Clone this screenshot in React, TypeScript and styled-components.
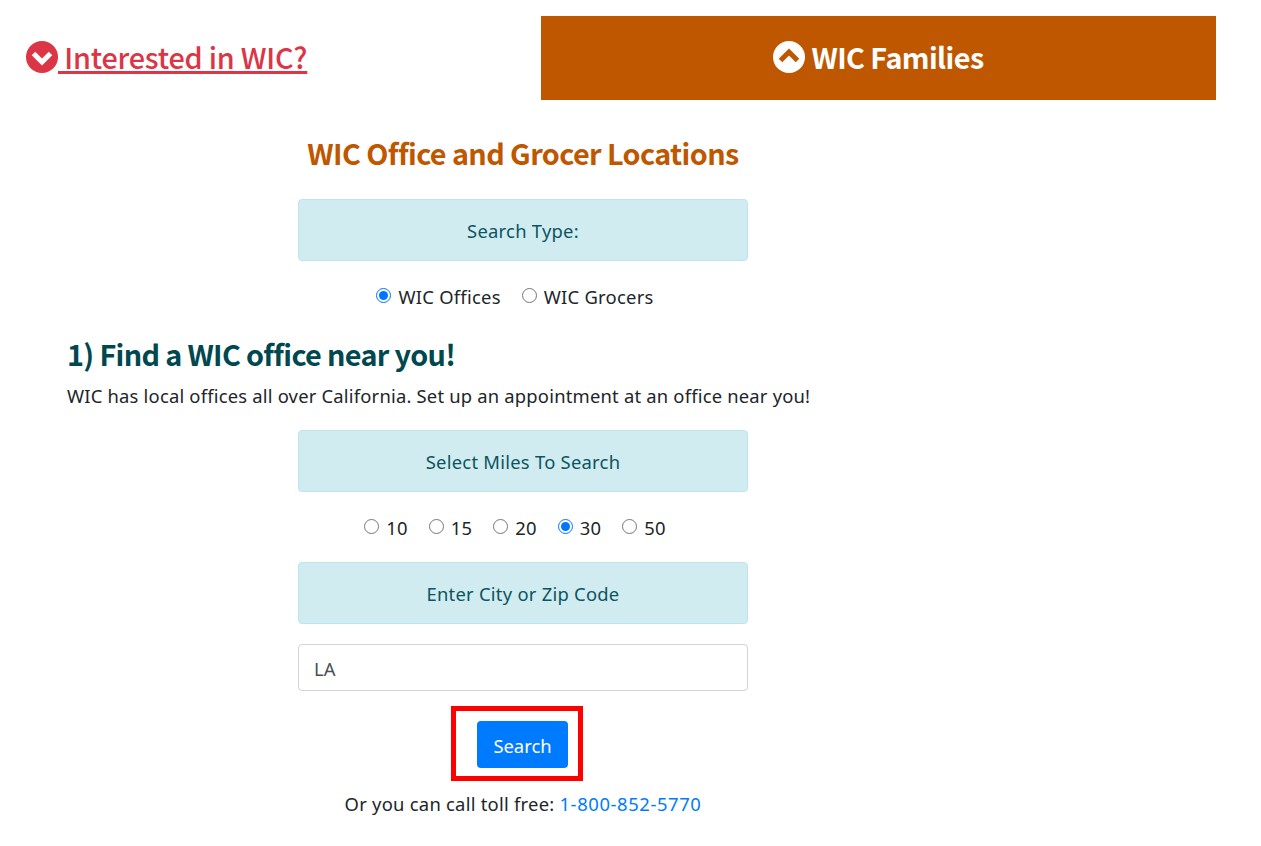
import React from "react";
import styled, { createGlobalStyle } from "styled-components";

const Global = createGlobalStyle`
  html, body { margin: 0; padding: 0; background: #fff; }
  body { font-family: "Open Sans", "Noto Sans", sans-serif; font-size: 20px; color: #212529; }
  * { box-sizing: border-box; }
`;

const headingFont = `"Noto Sans CJK JP", "Noto Sans CJK SC", sans-serif`;
const bodyFont = `"Noto Sans", "Open Sans", sans-serif`;

const Page = styled.div`
  width: 1261px;
  height: 846px;
  overflow: hidden;
  font-family: ${bodyFont};
  letter-spacing: 0.25px;
`;
const Header = styled.header`
  display: flex;
  padding-top: 16px;
  height: 100px;
`;
const LeftLink = styled.div`
  width: 541px;
  padding: 0 0 2px 26px;
  display: flex;
  align-items: center;
  color: #dc3545;
  font-family: ${headingFont};
  font-size: 28.8px;
  font-weight: 500;
  letter-spacing: -0.22px;
  line-height: 1;
`;
const Underlined = styled.a`
  color: #dc3545;
  text-decoration: underline;
  text-decoration-thickness: 3px;
  text-underline-offset: 2px;
  text-decoration-skip-ink: none;
  white-space: pre;
`;
const Banner = styled.div`
  width: 675px;
  height: 84px;
  padding-bottom: 4px;
  background: #bf5700;
  color: #fff;
  display: flex;
  align-items: center;
  justify-content: center;
  gap: 6px;
  font-family: ${headingFont};
  font-size: 28.8px;
  font-weight: 600;
  letter-spacing: -0.6px;

  svg {
    margin-top: 2px;
  }
`;
const Main = styled.main`
  width: 912px;
  margin-left: 67px;
  display: flex;
  flex-direction: column;
`;
const Title = styled.h2`
  margin: 31px 0 1px;
  height: 67px;
  text-align: center;
  color: #bf5700;
  font-family: ${headingFont};
  font-size: 28.8px;
  font-weight: 600;
  letter-spacing: -0.6px;
  line-height: 44px;
`;
const Alert = styled.div`
  width: 450px;
  height: 62px;
  align-self: center;
  background: #d1ecf1;
  border: 1px solid #bee5eb;
  border-radius: 4px;
  color: #0c5460;
  display: flex;
  align-items: center;
  justify-content: center;
  font-size: 18.4px;
`;
const SpacedAlert = styled(Alert)`
  margin-top: 20px;
`;
const RadioRow = styled.div`
  display: flex;
  justify-content: center;
  gap: 21px;
  height: 29px;
  margin: 21px 0 0;
  padding-right: 16px;
  font-size: 18.4px;
  line-height: 30px;
`;
const RadioLabel = styled.label`
  display: inline-flex;
  align-items: center;
  gap: 7px;
`;
const Radio = styled.input.attrs({ type: "radio" })`
  margin: 0 0 3px;
  width: 15px;
  height: 15px;
  accent-color: #0075ff;
`;
const SubTitle = styled.h3`
  margin: 21px 0 3px;
  color: #00484f;
  font-family: ${headingFont};
  font-size: 28.8px;
  font-weight: 600;
  letter-spacing: -0.67px;
  line-height: 44px;
`;
const Paragraph = styled.p`
  margin: 3px 0 20px;
  font-size: 18.4px;
  letter-spacing: 0.2px;
  line-height: 28px;
  white-space: nowrap;
`;
const TextField = styled.input`
  width: 450px;
  height: 47px;
  align-self: center;
  margin-top: 20px;
  padding: 1px 15px 0;
  border: 1px solid #ced4da;
  border-radius: 4px;
  color: #495057;
  font-family: ${bodyFont};
  font-size: 18.4px;
`;
const SearchFrame = styled.div`
  align-self: flex-start;
  margin-left: 384px;
  width: 132px;
  height: 75px;
  margin-top: 15px;
  padding: 10px 0 0 21px;
  border: 5px solid #ff0000;
`;
const SearchButton = styled.button`
  display: block;
  width: 91px;
  height: 47px;
  border: 0;
  border-radius: 4px;
  background: #007bff;
  color: #fff;
  font-family: ${bodyFont};
  font-size: 18.4px;
  padding: 2px 0 0;
`;
const Footer = styled.p`
  margin: 9px 0 0;
  text-align: center;
  font-size: 18.4px;
  line-height: 28px;
`;
const Phone = styled.a`
  color: #007bff;
  text-decoration: none;
  letter-spacing: 0.6px;
`;

const Chevron = ({ up, color }: { up?: boolean; color: string }) => (
  <svg width={32} height={32} viewBox="0 0 32 32" aria-hidden="true">
    <circle cx="16" cy="16" r="16" fill="currentColor" />
    <path
      d={up ? "M7.5 19.5 16 11l8.5 8.5" : "M7.5 12.5 16 21l8.5-8.5"}
      fill="none"
      stroke={color}
      strokeWidth="5"
    />
  </svg>
);

const miles = [10, 15, 20, 30, 50];

export default function App() {
  return (
    <Page>
      <Global />
      <Header>
        <LeftLink>
          <Chevron color="#fff" />
          <Underlined href="#"> Interested in WIC?</Underlined>
        </LeftLink>
        <Banner>
          <Chevron up color="#bf5700" />
          WIC Families
        </Banner>
      </Header>
      <Main>
        <Title>WIC Office and Grocer Locations</Title>
        <Alert>Search Type:</Alert>
        <RadioRow>
          <RadioLabel>
            <Radio name="type" defaultChecked />
            WIC Offices
          </RadioLabel>
          <RadioLabel>
            <Radio name="type" />
            WIC Grocers
          </RadioLabel>
        </RadioRow>
        <SubTitle>1) Find a WIC office near you!</SubTitle>
        <Paragraph>
          WIC has local offices all over California. Set up an appointment at an office near you!
        </Paragraph>
        <Alert>Select Miles To Search</Alert>
        <RadioRow>
          {miles.map((m) => (
            <RadioLabel key={m}>
              <Radio name="miles" defaultChecked={m === 30} />
              {m}
            </RadioLabel>
          ))}
        </RadioRow>
        <SpacedAlert>Enter City or Zip Code</SpacedAlert>
        <TextField defaultValue="LA" />
        <SearchFrame>
          <SearchButton>Search</SearchButton>
        </SearchFrame>
        <Footer>
          Or you can call toll free: <Phone href="#">1-800-852-5770</Phone>
        </Footer>
      </Main>
    </Page>
  );
}
